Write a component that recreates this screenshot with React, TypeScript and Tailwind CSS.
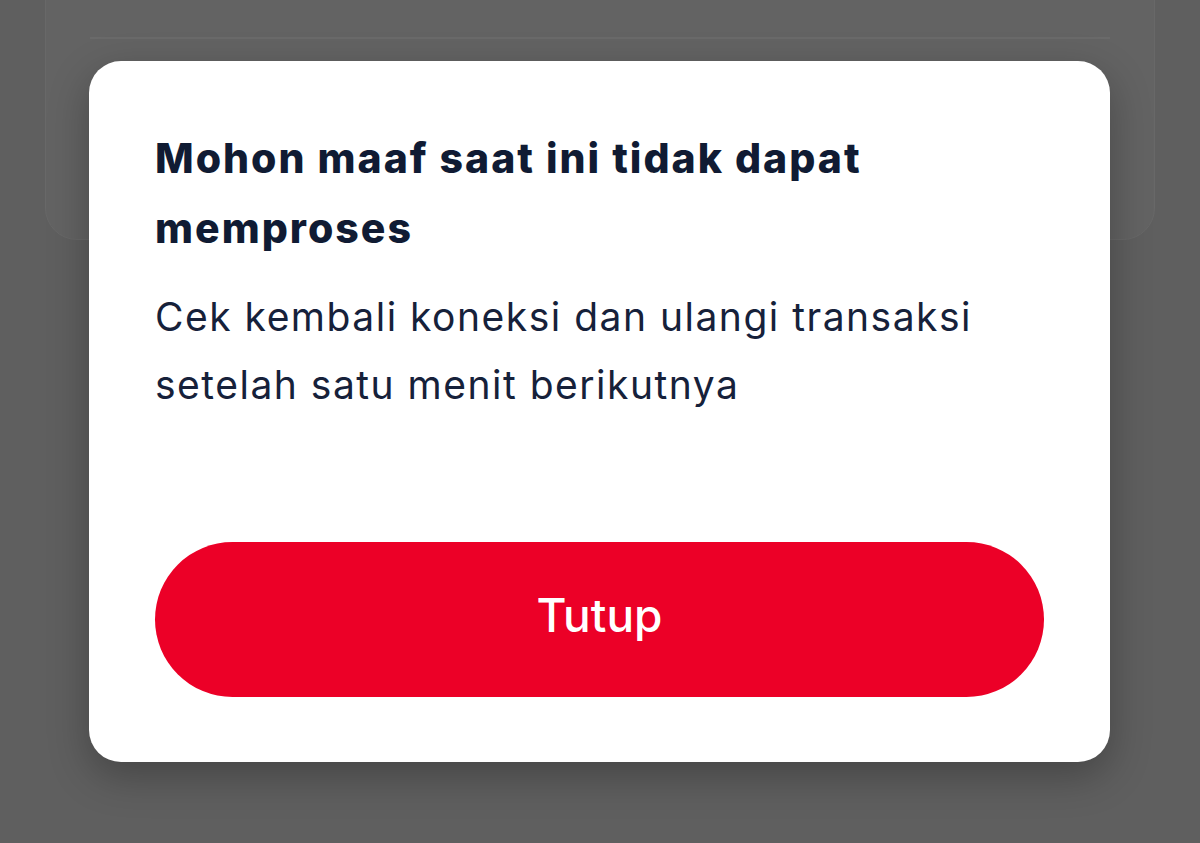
export default function App() {
  return (
    <div
      className="relative h-[843px] w-[1200px] overflow-hidden bg-[#5f5f5f]"
      style={{ fontFamily: "Inter, 'Noto Sans', sans-serif" }}
    >
      {/* page card behind the overlay */}
      <div className="absolute left-[45px] top-[-40px] h-[280px] w-[1110px] rounded-[32px] border border-[#686868] bg-[#636363]">
        <div className="mx-[44px] mt-[76px] h-[2px] bg-[#6a6a6a]" />
      </div>

      {/* dialog */}
      <div className="absolute left-[89px] top-[61px] flex h-[701px] w-[1021px] flex-col rounded-[32px] bg-white px-[66px] pb-[65px] pt-[62px] shadow-[0_14px_40px_rgba(0,0,0,0.28)]">
        <h2 className="text-[41px] font-extrabold leading-[70px] tracking-[2px] text-[#101b33]">
          Mohon maaf saat ini tidak dapat
          <br />
          memproses
        </h2>
        <p className="mt-[20px] text-[39px] font-normal leading-[68px] tracking-[1.5px] text-[#16213a]">
          Cek kembali koneksi dan ulangi transaksi
          <br />
          setelah satu menit berikutnya
        </p>
        <button className="mt-auto flex h-[155px] w-full items-center justify-center rounded-full bg-[#ec0027] pb-[8px] text-[46px] font-medium text-white">
          Tutup
        </button>
      </div>
    </div>
  );
}
